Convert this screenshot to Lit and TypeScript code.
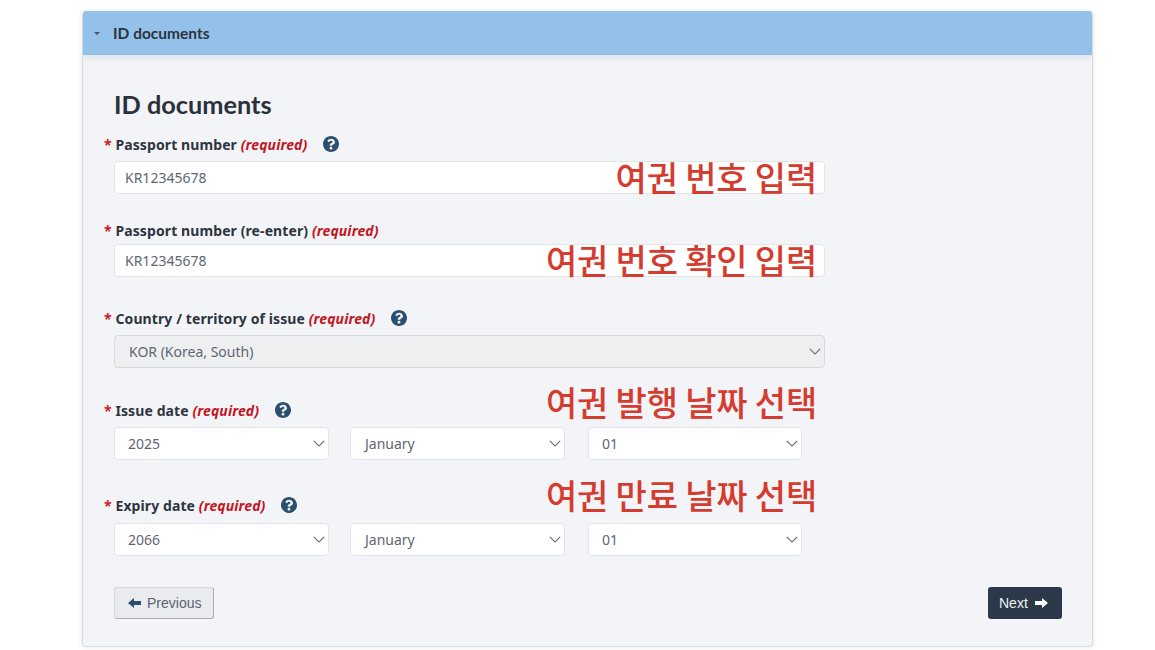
import { LitElement, html, css, svg } from "lit";
import { customElement } from "lit/decorators.js";

const help = html`<svg class="help" viewBox="8 8 496 496" aria-hidden="true"><path fill="#2c4f70" fill-rule="evenodd" d="M504 256c0 136.997-111.043 248-248 248S8 392.997 8 256C8 119.083 119.043 8 256 8s248 111.083 248 248zM262.655 90c-54.497 0-89.255 22.957-116.549 63.758-3.536 5.286-2.353 12.415 2.715 16.258l34.699 26.31c5.205 3.947 12.621 3.008 16.665-2.122 17.864-22.658 30.113-35.797 57.303-35.797 20.429 0 45.698 13.148 45.698 32.958 0 14.976-12.363 22.667-32.534 33.976C247.128 238.528 216 254.941 216 296v4c0 6.627 5.373 12 12 12h56c6.627 0 12-5.373 12-12v-1.333c0-28.462 83.186-29.647 83.186-106.667 0-58.002-60.165-101.999-116.531-102zM256 338c-25.365 0-46 20.635-46 46 0 25.364 20.635 46 46 46s46-20.636 46-46c0-25.365-20.635-46-46-46z"/></svg>`;
const chevron = html`<svg class="chev" viewBox="0 0 14 8" aria-hidden="true"><path d="M1 1l6 6 6-6" fill="none" stroke="#5d6470" stroke-width="1.3"/></svg>`;
const arrow = svg`<path d="M0 6L6 1V4H13V8H6V11Z"/>`;

@customElement("app-root")
export class AppRoot extends LitElement {
  static styles = css`
    :host { display: block; background: #fff; height: 650px; overflow: hidden; font-family: "Noto Sans", "Open Sans", sans-serif; }
    .panel { margin: 0 62px 0 82px; position: relative; top: 11px; height: 636px; box-sizing: border-box; background: #f2f4f7; border: 1px solid #d8dce2; border-top: 0; border-radius: 4px; box-shadow: 0 0 5px rgba(60,70,90,.14); overflow: hidden; }
    .bar { height: 44px; background: #93c1ea; display: flex; align-items: center; padding-left: 11px; gap: 13px; color: #2b3440; font: 700 15.5px "Lato", sans-serif; box-shadow: 0 3px 5px rgba(90,110,140,.12); }
    .caret { width: 0; height: 0; border: 3px solid transparent; border-top-color: #4b5765; border-bottom: 0; }
    .body { padding: 34px 31px 0 31px; display: flex; flex-direction: column; }
    h2 { margin: 0; font: 700 25.3px/30px "Lato", sans-serif; color: #2b303a; }
    .field { width: 711px; position: relative; display: flex; flex-direction: column; }
    .lab { margin-left: -10px; display: flex; align-items: center; height: 20px; font-size: 14px; letter-spacing: .1px; font-weight: 700; color: #2e3540; white-space: pre; }
    .star { color: #cf2027; }
    em { color: #c2161f; font-weight: 700; font-style: italic; }
    .help { width: 16px; height: 16px; margin-left: 16px; }
    .box { box-sizing: border-box; background: #fff; border: 1px solid #e2e4e8; border-radius: 4px; height: 33px; font-size: 14px; color: #5f6672; font-family: "Noto Sans", sans-serif; }
    input.box { width: 100%; padding: 0 10px; outline: none; }
    .sel { display: flex; align-items: center; justify-content: space-between; padding: 0 3px 0 13px; }
    .sel.off { background: #eeeff1; border-color: #d6d9de; padding-left: 14px; }
    .chev { width: 12px; height: 7px; }
    .row { display: flex; gap: 21px; }
    .row .box { width: 215px; }
    .row .box:nth-child(2) { padding-left: 14px; }
    .row .box:nth-child(3) { width: 214px; margin-left: 2px; }
    .note { position: absolute; right: 8px; font: 500 34px/40px "Noto Sans CJK KR", sans-serif; color: #d43c30; white-space: pre; letter-spacing: -.2px; }
    .f1 { margin-top: 15px; } .f1 .lab { margin-bottom: 7px; }
    .f2 { margin-top: 26px; } .f2 .lab { margin-bottom: 4px; }
    .f3 { margin-top: 31px; } .f3 .lab { margin-bottom: 7px; }
    .f4 { margin-top: 32px; } .f4 .lab { margin-bottom: 7px; }
    .f5 { margin-top: 35px; } .f5 .lab { margin-bottom: 8px; }
    .n1 { top: 23px; } .n2 { top: 20px; } .n3 { top: -18px; } .n4 { top: -20px; }
    .acts { display: flex; justify-content: space-between; margin-top: 31px; width: 948px; }
    .btn { height: 32px; box-sizing: border-box; border-radius: 3px; display: flex; align-items: center; gap: 6px; font: 14px "Liberation Sans", sans-serif; }
    .btn svg { width: 13px; height: 12px; }
    .prev { width: 100px; padding-left: 13px; background: #e9ebee; color: #5a6472; border: 1px solid #d4d7dc; border-right-color: #a9aeb5; border-bottom-color: #a9aeb5; }
    .prev svg { fill: #2c4f70; }
    .next { width: 74px; padding-left: 11px; gap: 7px; background: #2b3849; color: #eef1f4; }
    .next svg { fill: #fff; transform: scaleX(-1); }
  `;

  private sel(v: string) {
    return html`<div class="box sel"><span>${v}</span>${chevron}</div>`;
  }

  private label(name: string, withHelp: boolean) {
    return html`<div class="lab"><span class="star">* </span>${name} <em>(required)</em>${withHelp ? help : ""}</div>`;
  }

  render() {
    return html`
      <section class="panel">
        <div class="bar"><span class="caret"></span>ID documents</div>
        <div class="body">
          <h2>ID documents</h2>
          <div class="field f1">
            ${this.label("Passport number", true)}
            <input class="box" .value=${"KR12345678"} />
            <span class="note n1">여권 번호 입력</span>
          </div>
          <div class="field f2">
            ${this.label("Passport number (re-enter)", false)}
            <input class="box" .value=${"KR12345678"} />
            <span class="note n2">여권 번호 확인 입력</span>
          </div>
          <div class="field f3">
            ${this.label("Country / territory of issue", true)}
            <div class="box sel off"><span>KOR (Korea, South)</span>${chevron}</div>
          </div>
          <div class="field f4">
            ${this.label("Issue date", true)}
            <div class="row">${this.sel("2025")}${this.sel("January")}${this.sel("01")}</div>
            <span class="note n3">여권 발행 날짜 선택</span>
          </div>
          <div class="field f5">
            ${this.label("Expiry date", true)}
            <div class="row">${this.sel("2066")}${this.sel("January")}${this.sel("01")}</div>
            <span class="note n4">여권 만료 날짜 선택</span>
          </div>
          <div class="acts">
            <div class="btn prev"><svg viewBox="0 0 13 12">${arrow}</svg>Previous</div>
            <div class="btn next">Next<svg viewBox="0 0 13 12">${arrow}</svg></div>
          </div>
        </div>
      </section>
    `;
  }
}
